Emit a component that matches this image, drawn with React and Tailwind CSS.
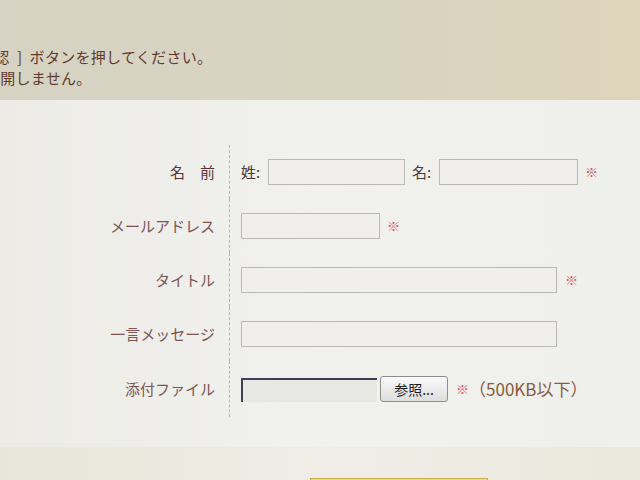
import React from 'react';

const jp = { fontFamily: '"Noto Sans CJK JP", "Noto Sans", sans-serif' };

const Mark = ({ className = '' }) => (
  <span className={`text-[13px] text-[#e2556a] ${className}`}>※</span>
);

const Field = ({ className = '' }) => (
  <div className={`h-[26px] border border-[#b9b9b6] bg-[#f0efeb] ${className}`} />
);

const Row = ({ label, labelClass = 'text-[#7d5452]', height = 'h-[54px]', children }) => (
  <div className={`flex ${height}`}>
    <div className={`w-[215px] flex items-center justify-end text-[15px] ${labelClass}`}>{label}</div>
    <div className="ml-[14px] border-l border-dashed border-[#b5b5b2] pl-[11px] flex items-center">
      {children}
    </div>
  </div>
);

export default function App() {
  return (
    <div className="w-[640px] h-[480px] overflow-hidden flex flex-col bg-[#efeeea]" style={jp}>
      {/* notice band */}
      <div className="shrink-0 h-[100px] bg-gradient-to-r from-[#d6d3c4] via-[#d9d4c0] to-[#ddd5bc] pt-[46px] text-[15px] leading-[21px] text-[#5f3a2c] overflow-hidden whitespace-nowrap">
        <div className="-ml-[21px] tracking-[0.3px]">確認 &nbsp;] &nbsp;ボタンを押してください。</div>
        <div className="-ml-[61px] tracking-[0.3px]">情報は公開しません。</div>
      </div>

      {/* form */}
      <div className="shrink-0 pt-[45px] bg-gradient-to-r from-[#ecebe6] via-[#f1f1ee] to-[#efefeb]">
        <Row label="名　前" labelClass="text-[#5a3434]">
          <span className="text-[15px] text-[#4a3a34] w-[27px]">姓:</span>
          <Field className="w-[137px]" />
          <span className="text-[15px] text-[#4a3a34] ml-[7px] w-[27px]">名:</span>
          <Field className="w-[139px]" />
          <Mark className="ml-[7px]" />
        </Row>
        <Row label="メールアドレス">
          <Field className="w-[139px]" />
          <Mark className="ml-[7px]" />
        </Row>
        <Row label="タイトル">
          <Field className="w-[316px]" />
          <Mark className="ml-[8px]" />
        </Row>
        <Row label="一言メッセージ">
          <Field className="w-[316px]" />
        </Row>
        <Row label="添付ファイル" height="h-[56px]">
          <div className="w-[136px] h-[24px] border-t-2 border-l-2 border-[#3e3e55] bg-[#e7e7e4] mt-[2px]" />
          <div className="ml-[3px] w-[68px] h-[26px] rounded-[3px] border border-[#8e8e8e] bg-gradient-to-b from-[#fafafa] to-[#dedede] flex items-center justify-center text-[14px] text-[#1e1e1e]">
            参照...
          </div>
          <Mark className="ml-[8px] text-[11px]" />
          <span className="text-[17px] text-[#8a5a42]">（500KB以下）</span>
        </Row>
        <div className="h-[30px]" />
      </div>

      {/* submit band */}
      <div className="flex-1 bg-gradient-to-r from-[#e8e5d9] via-[#efede6] to-[#ebe8dd]">
        <div className="ml-[310px] mt-[31px] w-[178px] h-[20px] border border-[#c9ad4e] bg-[#f3dc6a]" />
      </div>
    </div>
  );
}
